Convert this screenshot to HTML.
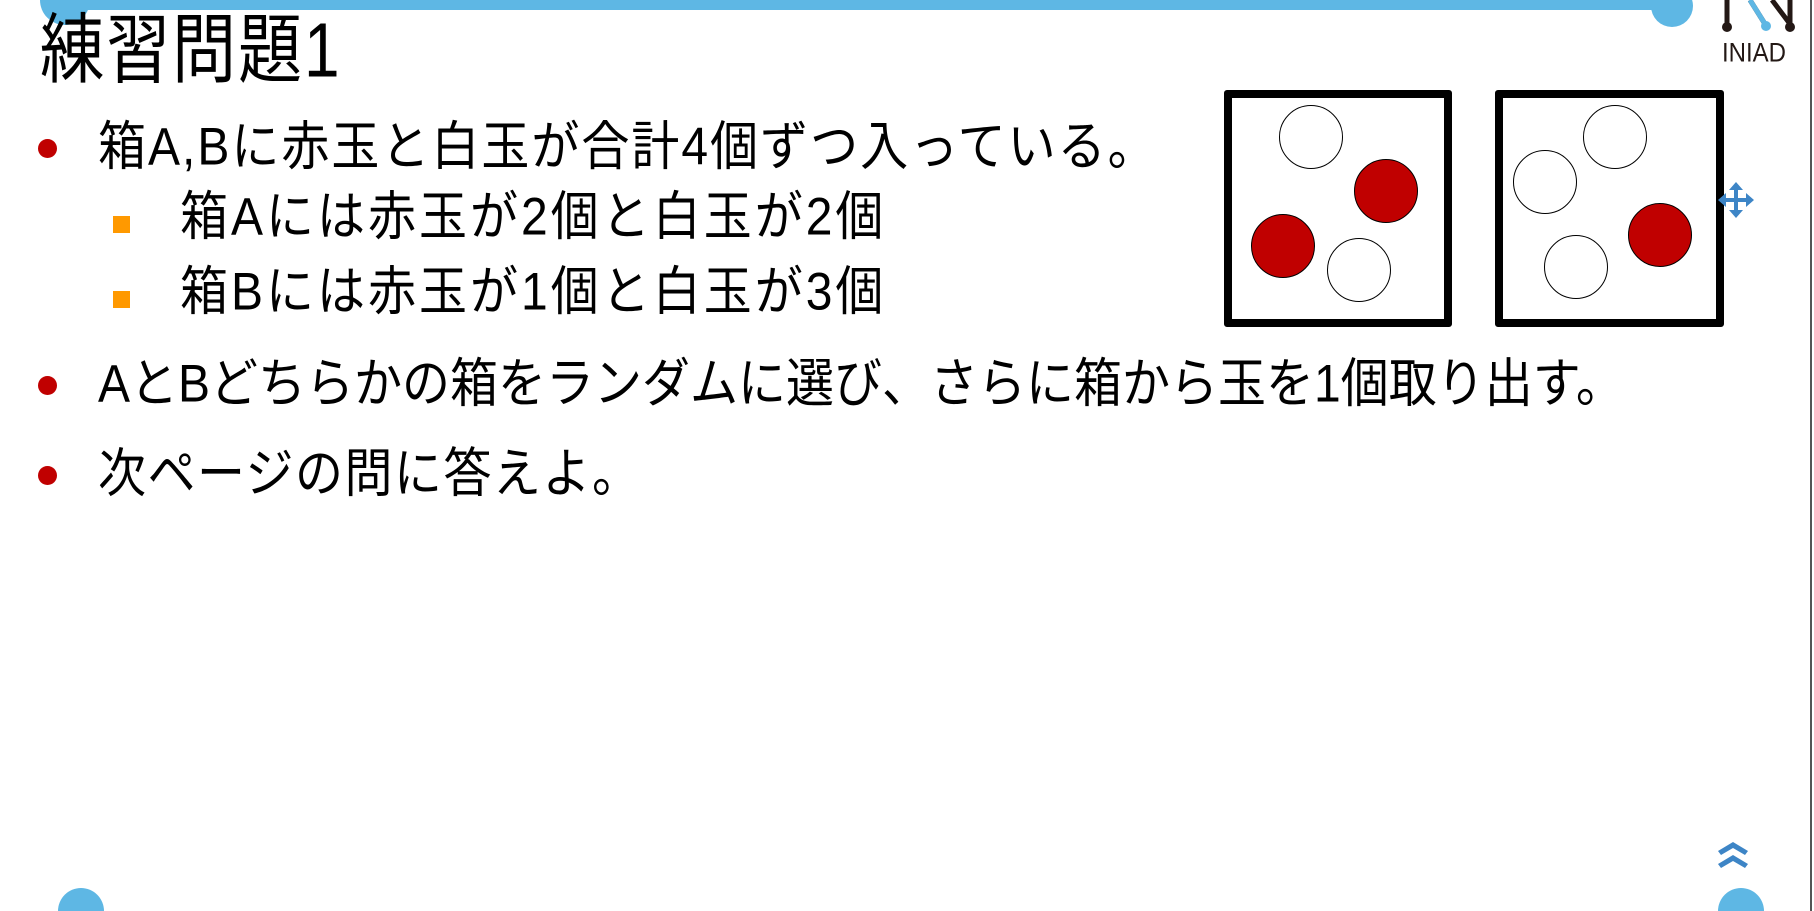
<!DOCTYPE html>
<html><head><meta charset="utf-8"><style>
html,body{margin:0;width:1814px;height:911px;overflow:hidden}
body{background:#fff;position:relative;font-family:"Liberation Sans","Noto Sans CJK JP",sans-serif;color:#000}
.a{position:absolute}
.t{position:absolute;white-space:nowrap;font-size:48px;line-height:1;transform:scaleY(1.1);transform-origin:0 50%}
.dot{position:absolute;width:19px;height:19px;border-radius:50%;background:#c00000}
.sq{position:absolute;width:17px;height:17px;background:#ff9900}
.box{position:absolute;border:8px solid #000;border-radius:3px;background:#fff}
.b{position:absolute;width:64px;height:64px;border-radius:50%;border:1.5px solid #000;box-sizing:border-box;background:#fff}
.r{background:#c00000}
</style></head><body>
<div class="a" style="left:40px;top:-25px;width:50px;height:50px;border-radius:50%;background:#5eb7e4"></div>
<div class="a" style="left:70px;top:0;width:1600px;height:10px;background:#5eb7e4"></div>
<div class="a" style="left:1651px;top:-15px;width:42px;height:42px;border-radius:50%;background:#5eb7e4"></div>
<div class="a" style="left:58px;top:888px;width:46px;height:46px;border-radius:50%;background:#5eb7e4"></div>
<div class="a" style="left:1718px;top:888px;width:46px;height:46px;border-radius:50%;background:#5eb7e4"></div>
<div class="a" style="left:1810px;top:0;width:2px;height:911px;background:#555"></div>
<div class="t" style="left:40px;top:18px;font-size:64px;transform:scaleY(1.2);letter-spacing:2px">練習問題1</div>

<div class="dot" style="left:38px;top:139px"></div>
<div class="t" style="left:98px;top:124px;letter-spacing:2px">箱A,Bに赤玉と白玉が合計4個ずつ入っている。</div>
<div class="sq" style="left:113px;top:216px"></div>
<div class="t" style="left:180px;top:194px;letter-spacing:3px">箱Aには赤玉が2個と白玉が2個</div>
<div class="sq" style="left:113px;top:291px"></div>
<div class="t" style="left:180px;top:269px;letter-spacing:3px">箱Bには赤玉が1個と白玉が3個</div>
<div class="dot" style="left:38px;top:376px"></div>
<div class="t" style="left:98px;top:361px">AとBどちらかの箱をランダムに選び、さらに箱から玉を1個取り出す。</div>
<div class="dot" style="left:38px;top:466px"></div>
<div class="t" style="left:98px;top:451px;letter-spacing:1.5px">次ページの問に答えよ。</div>

<div class="box" style="left:1224px;top:90px;width:212px;height:221px"></div>
<div class="b" style="left:1279px;top:105px"></div>
<div class="b r" style="left:1354px;top:159px"></div>
<div class="b r" style="left:1251px;top:214px"></div>
<div class="b" style="left:1327px;top:238px"></div>
<div class="box" style="left:1495px;top:90px;width:213px;height:221px"></div>
<div class="b" style="left:1583px;top:105px"></div>
<div class="b" style="left:1513px;top:150px"></div>
<div class="b r" style="left:1628px;top:203px"></div>
<div class="b" style="left:1544px;top:235px"></div>

<svg class="a" style="left:1716px;top:180px" width="40" height="40" viewBox="0 0 40 40" fill="#3d85c6"><path d="M20 2l7 8h-5v8h8v-5l8 7-8 7v-5h-8v8h5l-7 8-7-8h5v-8h-8v5l-8-7 8-7v5h8v-8h-5z"/></svg>
<svg class="a" style="left:1716px;top:840px" width="34" height="34" viewBox="0 0 34 34" fill="#3d85c6"><path d="M17 2l15 9-3 4-12-7-12 7-3-4z M17 15l15 9-3 4-12-7-12 7-3-4z"/></svg>

<svg class="a" style="left:1720px;top:0" width="78" height="36" viewBox="0 0 78 36"><path d="M7 0v26M30 0l15 24M52 0l18 24M70 0v26" stroke="#231815" stroke-width="5"/><path d="M30 0l15 24" stroke="#5eb7e4" stroke-width="5"/><circle cx="7" cy="27" r="5" fill="#231815"/><circle cx="46" cy="26" r="5" fill="#5eb7e4"/><circle cx="70" cy="27" r="5" fill="#231815"/></svg>
<div class="t" style="left:1722px;top:42px;font-size:24px;color:#231815;transform:scaleY(1.1)">INIAD</div>
</body></html>
